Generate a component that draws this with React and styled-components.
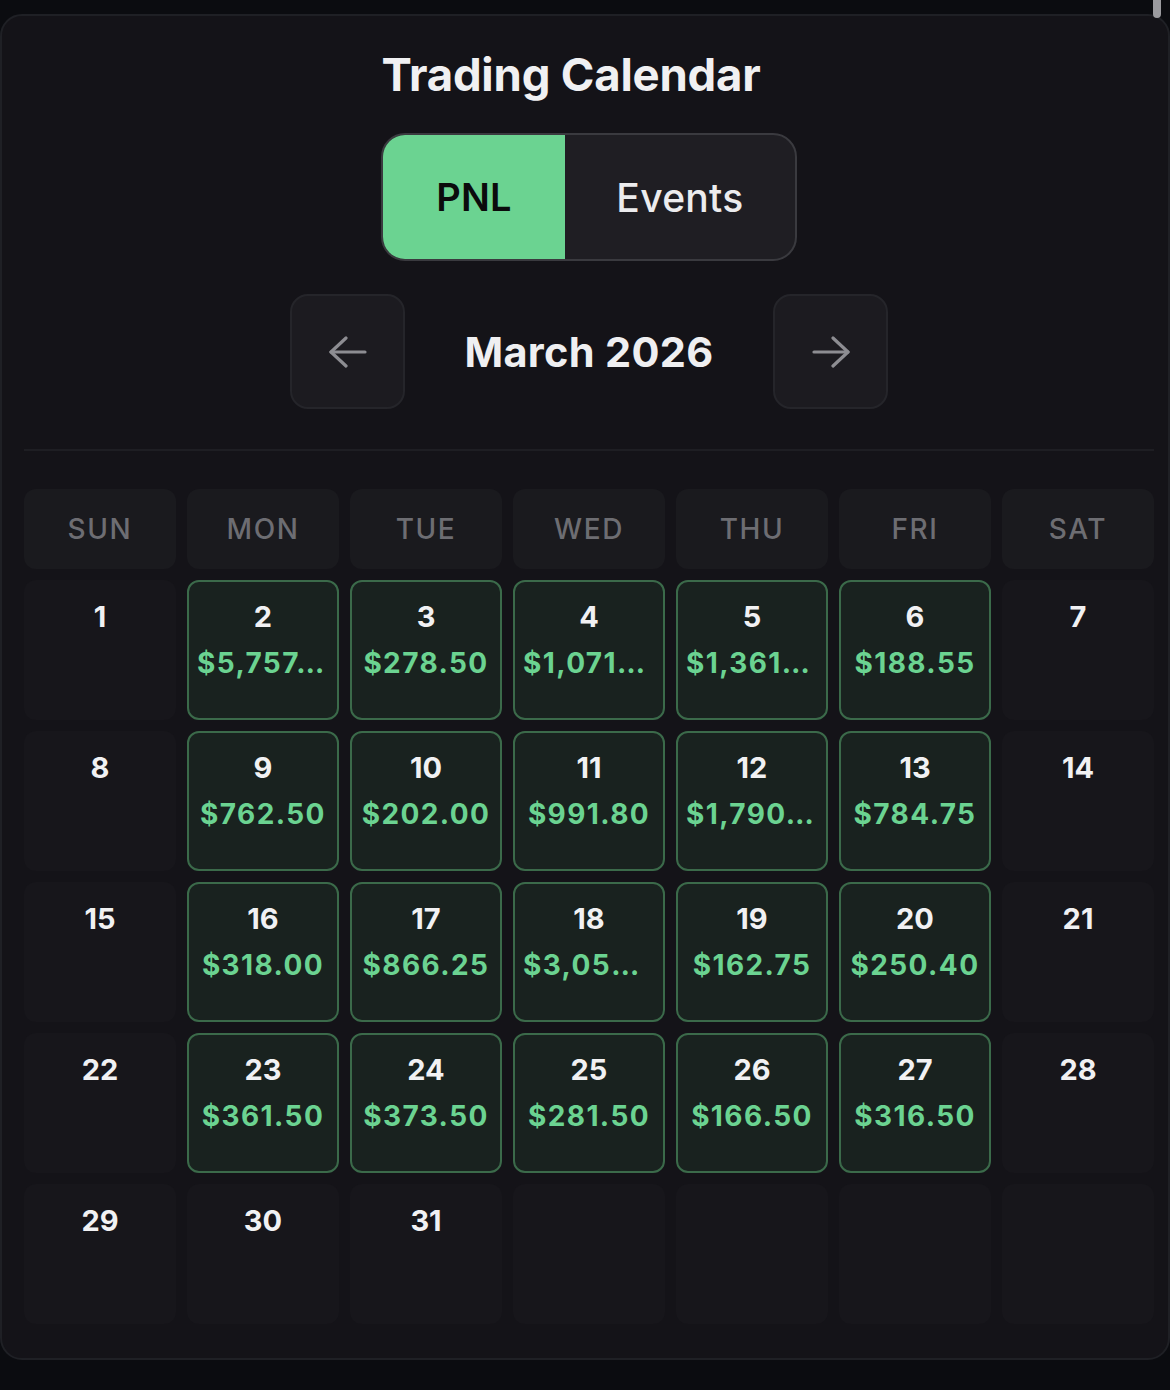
import styled, { createGlobalStyle } from "styled-components";
import { useState } from "react";

const GlobalStyle = createGlobalStyle`
  html, body {
    margin: 0;
    padding: 0;
    background: #0b0c10;
    overflow: hidden;
  }
  body {
    font-family: Inter, "Noto Sans", sans-serif;
    -webkit-font-smoothing: antialiased;
  }
`;

const WEEKDAYS = ["SUN", "MON", "TUE", "WED", "THU", "FRI", "SAT"];

// pnl per trading day, march 2026 starts on a sunday
const PNL = {
  2: 5757.25,
  3: 278.5,
  4: 1071.5,
  5: 1361.25,
  6: 188.55,
  9: 762.5,
  10: 202.0,
  11: 991.8,
  12: 1790.5,
  13: 784.75,
  16: 318.0,
  17: 866.25,
  18: 3050.75,
  19: 162.75,
  20: 250.4,
  23: 361.5,
  24: 373.5,
  25: 281.5,
  26: 166.5,
  27: 316.5,
};

const money = (v) =>
  "$" +
  v.toLocaleString("en-US", {
    minimumFractionDigits: 2,
    maximumFractionDigits: 2,
  });

const ArrowIcon = ({ dir }) => (
  <svg
    width="38"
    height="32"
    viewBox="0 0 38 32"
    fill="none"
    stroke="#8d8d92"
    strokeWidth="3.2"
    strokeLinecap="round"
    strokeLinejoin="round"
    style={{ transform: dir === "right" ? "scaleX(-1)" : "none" }}
  >
    <path d="M36 16H2" />
    <path d="M17 2L2 16l15 14" />
  </svg>
);

const App = () => {
  const [mode, setMode] = useState("pnl");

  const cells = [];
  for (let d = 1; d <= 35; d++) cells.push(d <= 31 ? d : null);

  return (
    <>
      <GlobalStyle />
      <ScrollThumb />
      <Page>
        <Card>
          <Title>Trading Calendar</Title>

          <Toggle>
            <ToggleButton
              active={mode === "pnl"}
              wide={false}
              onClick={() => setMode("pnl")}
            >
              PNL
            </ToggleButton>
            <ToggleButton
              active={mode === "events"}
              wide
              onClick={() => setMode("events")}
            >
              Events
            </ToggleButton>
          </Toggle>

          <MonthNav>
            <NavButton aria-label="Previous month">
              <ArrowIcon dir="left" />
            </NavButton>
            <MonthLabel>March 2026</MonthLabel>
            <NavButton aria-label="Next month">
              <ArrowIcon dir="right" />
            </NavButton>
          </MonthNav>

          <Divider />

          <Grid>
            {WEEKDAYS.map((w) => (
              <WeekdayCell key={w}>{w}</WeekdayCell>
            ))}
            {cells.map((d, i) =>
              d ? (
                <DayCell key={i} traded={!!PNL[d]}>
                  <DayNum>{d}</DayNum>
                  {PNL[d] && <Amount>{money(PNL[d])}</Amount>}
                </DayCell>
              ) : (
                <DayCell key={i} traded={false} />
              )
            )}
          </Grid>
        </Card>
      </Page>
    </>
  );
};

export default App;

const Page = styled.div`
  padding-top: 14px;
  width: 1170px;
  height: 1390px;
  box-sizing: border-box;
`;

const ScrollThumb = styled.div`
  position: fixed;
  top: -6px;
  right: 9px;
  width: 8px;
  height: 24px;
  border-radius: 4px;
  background: #9b9b9f;
  z-index: 5;
`;

const Card = styled.div`
  box-sizing: border-box;
  width: 1170px;
  height: 1346px;
  background: #141318;
  border: 2px solid #1f2025;
  border-radius: 22px;
  padding: 31px 14px 0 22px;
  display: flex;
  flex-direction: column;
  align-items: center;
`;

const Title = styled.h1`
  margin: 0;
  font-size: 45.5px;
  line-height: 56px;
  font-weight: 700;
  color: #f0f0f2;
  letter-spacing: -0.2px;
  padding-right: 36px;
`;

const Toggle = styled.div`
  margin-top: 30px;
  display: flex;
  width: 416px;
  height: 128px;
  box-sizing: border-box;
  border: 2px solid #3a3a3f;
  border-radius: 24px;
  overflow: hidden;
  background: #1f1e23;
`;

const ToggleButton = styled.button`
  flex: ${({ wide }) => (wide ? "0 0 230px" : "0 0 182px")};
  border: none;
  margin: 0;
  font-family: Inter, "Noto Sans", sans-serif;
  font-size: ${({ wide }) => (wide ? "39px" : "38px")};
  font-weight: ${({ active }) => (active ? 600 : 500)};
  letter-spacing: 0.3px;
  color: ${({ active }) => (active ? "#0b0b0c" : "#ececee")};
  background: ${({ active }) => (active ? "#6bd391" : "transparent")};
  cursor: pointer;
`;

const MonthNav = styled.div`
  margin-top: 33px;
  display: flex;
  align-items: center;
`;

const NavButton = styled.button`
  width: 115px;
  height: 115px;
  box-sizing: border-box;
  display: flex;
  align-items: center;
  justify-content: center;
  background: #1c1b20;
  border: 2px solid #25252a;
  border-radius: 18px;
  padding: 0;
  cursor: pointer;
`;

const MonthLabel = styled.div`
  width: 368px;
  text-align: center;
  font-size: 41.5px;
  font-weight: 700;
  color: #efeff1;
  letter-spacing: 0.3px;
`;

const Divider = styled.div`
  align-self: stretch;
  margin-top: 40px;
  height: 2px;
  background: #1e1e23;
`;

const Grid = styled.div`
  margin-top: 38px;
  width: 1130px;
  display: grid;
  grid-template-columns: repeat(7, 1fr);
  grid-template-rows: 80px repeat(5, 140px);
  column-gap: 11px;
  row-gap: 11px;
  align-self: flex-start;
`;

const WeekdayCell = styled.div`
  display: flex;
  align-items: center;
  justify-content: center;
  background: #1a1a1e;
  border-radius: 12px;
  font-size: 28px;
  font-weight: 500;
  letter-spacing: 1.6px;
  color: #6d6d72;
`;

const DayCell = styled.div`
  box-sizing: border-box;
  min-width: 0;
  display: flex;
  flex-direction: column;
  align-items: center;
  padding: ${({ traded }) => (traded ? "18px 8px 0" : "20px 10px 0")};
  border-radius: 12px;
  background: ${({ traded }) => (traded ? "#19221f" : "#17161b")};
  border: ${({ traded }) => (traded ? "2px solid #3b6a4a" : "none")};
`;

const DayNum = styled.div`
  font-size: 29px;
  line-height: 34px;
  font-weight: 700;
  color: #f1f1f3;
`;

const Amount = styled.div`
  margin-top: 12px;
  max-width: 100%;
  font-size: 28px;
  line-height: 34px;
  font-weight: 700;
  letter-spacing: 1.4px;
  color: #6bd391;
  white-space: nowrap;
  overflow: hidden;
  text-overflow: ellipsis;
`;
